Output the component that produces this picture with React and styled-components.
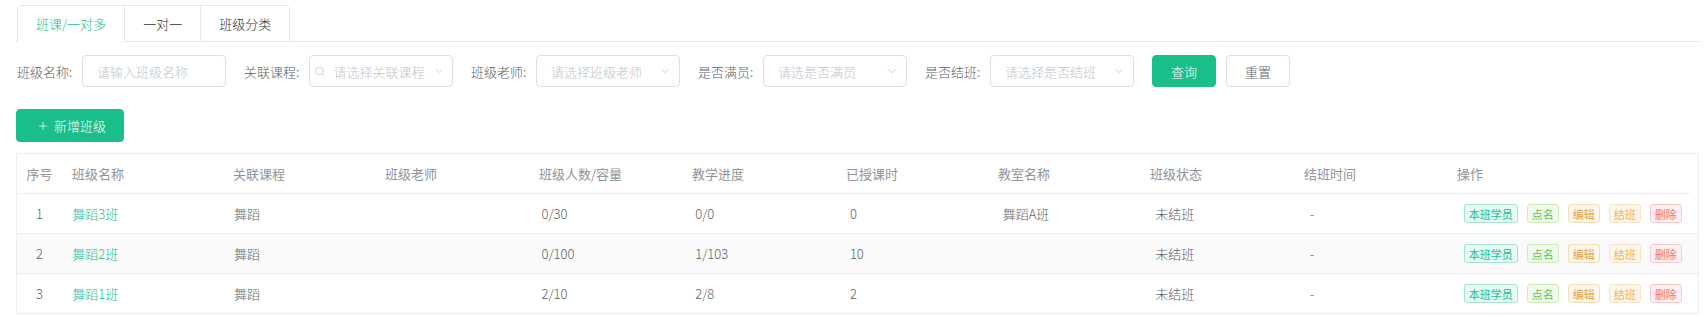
import styled, { createGlobalStyle } from "styled-components";
import { Search, ChevronDown, Plus } from "lucide-react";

const GlobalStyle = createGlobalStyle`
  body {
    margin: 0;
    background: #fff;
    font-family: "Noto Sans CJK SC", "Noto Sans", sans-serif;
    font-weight: 300;
    color: #606266;
  }
`;

const green = "#19be8b";

const Page = styled.div`
  padding: 5px 9px 0 16px;
`;

const TabNav = styled.div`
  display: flex;
  border-bottom: 1px solid #e4e7ed;
  padding-left: 1px;
`;

const TabList = styled.div`
  display: flex;
  border: 1px solid #e4e7ed;
  border-bottom: none;
  border-radius: 4px 4px 0 0;
  margin-bottom: -1px;
`;

const Tab = styled.div`
  height: 35px;
  padding: 0 18px;
  display: flex;
  align-items: center;
  font-size: 13px;
  color: ${(p) => (p.$active ? green : "#303133")};
  border-left: ${(p) => (p.$first ? "none" : "1px solid #e4e7ed")};
  border-bottom: 1px solid ${(p) => (p.$active ? "#fff" : "#e4e7ed")};
  background: #fff;
`;

const SearchBar = styled.div`
  display: flex;
  align-items: center;
  gap: 18px;
  margin-top: 13px;
  padding-left: 1px;
`;

const Field = styled.div`
  display: flex;
  align-items: center;
  gap: 9px;
`;

const Label = styled.span`
  min-width: 56px;
  font-size: 13px;
  color: #606266;
  white-space: nowrap;
`;

const InputBox = styled.div`
  width: 144px;
  height: 32px;
  box-sizing: border-box;
  border: 1px solid #dcdfe6;
  border-radius: 4px;
  display: flex;
  align-items: center;
  padding: 0 ${(p) => (p.$select ? "7px" : "14px")} 0 ${(p) => (p.$icon ? "4px" : "14px")};
  gap: ${(p) => (p.$icon ? "8px" : "6px")};
  color: #c0c4cc;
  font-size: 13px;
`;

const Placeholder = styled.span`
  flex: 1;
  white-space: nowrap;
  color: #c0c4cc;
`;

const Buttons = styled.div`
  display: flex;
  gap: 10px;
`;

const Button = styled.button`
  height: ${(p) => (p.$tall ? "33px" : "32px")};
  min-width: 62px;
  padding: 0 ${(p) => (p.$tall ? "17px 0 20px" : "18px")};
  box-sizing: border-box;
  border-radius: 4px;
  font-family: inherit;
  font-weight: 300;
  font-size: 13px;
  display: inline-flex;
  align-items: center;
  justify-content: center;
  gap: 5px;
  cursor: pointer;
  border: 1px solid ${(p) => (p.$primary ? green : "#dcdfe6")};
  background: ${(p) => (p.$primary ? green : "#fff")};
  color: ${(p) => (p.$primary ? "#fff" : "#606266")};
`;

const Toolbar = styled.div`
  margin-top: 22px;
`;

const Table = styled.div`
  margin-top: 11px;
  border: 1px solid #ebeef5;
  border-bottom: none;
`;

const cols = "45fr 161fr 152fr 154fr 153fr 154fr 152fr 152fr 154fr 153fr 243fr";

const HeadRow = styled.div`
  display: grid;
  grid-template-columns: ${cols};
  height: 40px;
  box-sizing: border-box;
  border-bottom: 1px solid #ebeef5;
  margin-right: 8px;
`;

const Row = styled.div`
  display: grid;
  grid-template-columns: ${cols};
  height: 40px;
  box-sizing: border-box;
  border-bottom: 1px solid #ebeef5;
  background: ${(p) => (p.$striped ? "#fafafa" : "#fff")};
`;

const Cell = styled.div`
  display: flex;
  align-items: center;
  justify-content: ${(p) => (p.$center ? "center" : "flex-start")};
  padding: 0 ${(p) => (p.$center ? "0" : "10px")};
  font-size: 13px;
  font-weight: ${(p) => (p.$head ? 400 : 300)};
  color: ${(p) => (p.$head ? "#909399" : p.$link ? green : "#606266")};
  white-space: nowrap;
  overflow: hidden;
  gap: 9px;
`;

const tagColors = {
  primary: { bg: "#e8f8f3", border: "#a3e3d0", color: green },
  success: { bg: "#f0f9eb", border: "#cfeabd", color: "#67c23a" },
  warning: { bg: "#fdf6ec", border: "#f5dcb4", color: "#e6a23c" },
  warn2: { bg: "#fdf6ec", border: "#f8e3c5", color: "#eeb25e" },
  danger: { bg: "#fef0f0", border: "#fbcaca", color: "#f56c6c" },
};

const Tag = styled.span`
  height: 19px;
  box-sizing: border-box;
  padding: 0 4px;
  display: inline-flex;
  align-items: center;
  font-size: 11px;
  font-weight: 400;
  border-radius: 3px;
  border: 1px solid ${(p) => tagColors[p.$type].border};
  background: ${(p) => tagColors[p.$type].bg};
  color: ${(p) => tagColors[p.$type].color};
`;

const headers = [
  "班级名称",
  "关联课程",
  "班级老师",
  "班级人数/容量",
  "教学进度",
  "已授课时",
  "教室名称",
  "班级状态",
  "结班时间",
  "操作",
];

const rows = [
  { name: "舞蹈3班", course: "舞蹈", count: "0/30", progress: "0/0", hours: "0", room: "舞蹈A班" },
  { name: "舞蹈2班", course: "舞蹈", count: "0/100", progress: "1/103", hours: "10", room: "" },
  { name: "舞蹈1班", course: "舞蹈", count: "2/10", progress: "2/8", hours: "2", room: "" },
];

const fields = [
  { label: "班级名称:", placeholder: "请输入班级名称" },
  { label: "关联课程:", placeholder: "请选择关联课程", select: true, icon: true },
  { label: "班级老师:", placeholder: "请选择班级老师", select: true },
  { label: "是否满员:", placeholder: "请选是否满员", select: true },
  { label: "是否结班:", placeholder: "请选择是否结班", select: true },
];

export default function App() {
  return (
    <Page>
      <GlobalStyle />
      <TabNav>
        <TabList>
          <Tab $active $first>班课/一对多</Tab>
          <Tab>一对一</Tab>
          <Tab>班级分类</Tab>
        </TabList>
      </TabNav>

      <SearchBar>
        {fields.map((f) => (
          <Field key={f.label}>
            <Label>{f.label}</Label>
            <InputBox $select={f.select} $icon={f.icon}>
              {f.icon && <Search size={13} strokeWidth={1.5} color="#c0c4cc" />}
              <Placeholder>{f.placeholder}</Placeholder>
              {f.select && <ChevronDown size={14} strokeWidth={1.3} color="#c0c4cc" />}
            </InputBox>
          </Field>
        ))}
        <Buttons>
          <Button $primary>查询</Button>
          <Button>重置</Button>
        </Buttons>
      </SearchBar>

      <Toolbar>
        <Button $primary $tall>
          <Plus size={12} strokeWidth={1.5} />
          新增班级
        </Button>
      </Toolbar>

      <Table>
        <HeadRow>
          <Cell $head $center>序号</Cell>
          {headers.map((h) => (
            <Cell $head key={h}>{h}</Cell>
          ))}
        </HeadRow>
        {rows.map((r, i) => (
          <Row key={r.name} $striped={i % 2 === 1}>
            <Cell $center>{i + 1}</Cell>
            <Cell $link>{r.name}</Cell>
            <Cell>{r.course}</Cell>
            <Cell></Cell>
            <Cell>{r.count}</Cell>
            <Cell>{r.progress}</Cell>
            <Cell>{r.hours}</Cell>
            <Cell>{r.room}</Cell>
            <Cell>未结班</Cell>
            <Cell>-</Cell>
            <Cell>
              <Tag $type="primary">本班学员</Tag>
              <Tag $type="success">点名</Tag>
              <Tag $type="warning">编辑</Tag>
              <Tag $type="warn2">结班</Tag>
              <Tag $type="danger">删除</Tag>
            </Cell>
          </Row>
        ))}
      </Table>
    </Page>
  );
}
